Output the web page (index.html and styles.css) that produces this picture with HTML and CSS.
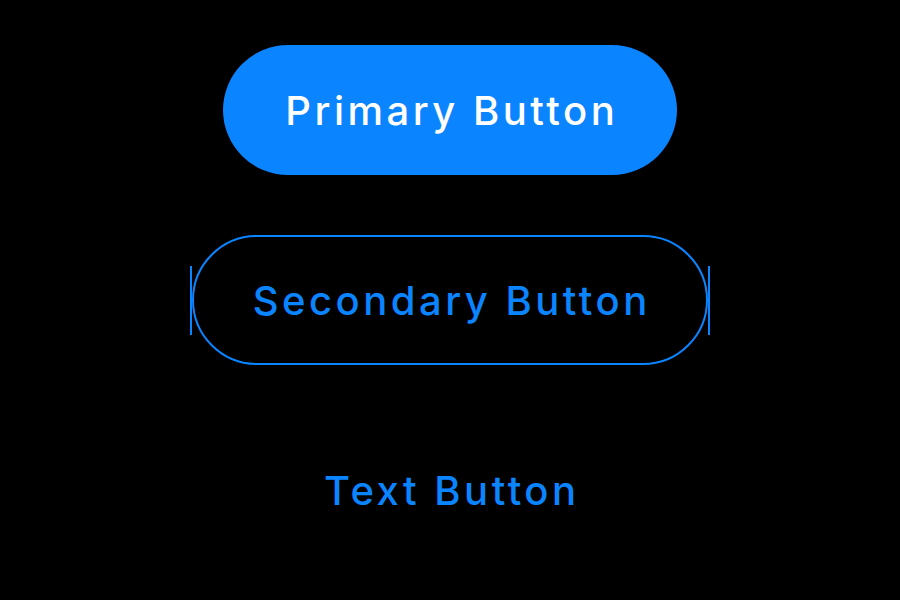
FILE: index.html
```html
<!DOCTYPE html>
<html lang="en">
<head>
<meta charset="utf-8">
<title>Buttons</title>
<link rel="stylesheet" href="styles.css">
</head>
<body>
<main class="stack">
  <button class="btn btn-primary" type="button">Primary Button</button>
  <button class="btn btn-secondary" type="button">Secondary Button</button>
  <button class="btn btn-text" type="button">Text Button</button>
</main>
</body>
</html>
```
FILE: styles.css
```css
html, body {
  margin: 0;
  padding: 0;
  background: #000;
  width: 900px;
  height: 600px;
  overflow: hidden;
}

.stack {
  height: 600px;
  display: flex;
  flex-direction: column;
  align-items: center;
  justify-content: center;
  gap: 60px;
}

.btn {
  font-family: Inter, "Noto Sans", sans-serif;
  font-size: 40px;
  font-weight: 500;
  letter-spacing: 3.5px;
  height: 130px;
  padding: 0 58.5px 0 62px;
  border-radius: 65px;
  border: none;
  background: transparent;
  color: #0a84ff;
  display: flex;
  align-items: center;
  justify-content: center;
  box-sizing: border-box;
  cursor: pointer;
}

.btn-primary {
  background: #0a84ff;
  color: #fff;
}

.btn-secondary {
  position: relative;
  border: 2.5px solid #0a84ff;
  padding: 0 55.5px 0 59px;
}

.btn-secondary::before,
.btn-secondary::after {
  content: "";
  position: absolute;
  top: 29px;
  width: 2.5px;
  height: 69px;
  background: #0a84ff;
}

.btn-secondary::before { left: -4px; }
.btn-secondary::after { right: -4px; }
```
